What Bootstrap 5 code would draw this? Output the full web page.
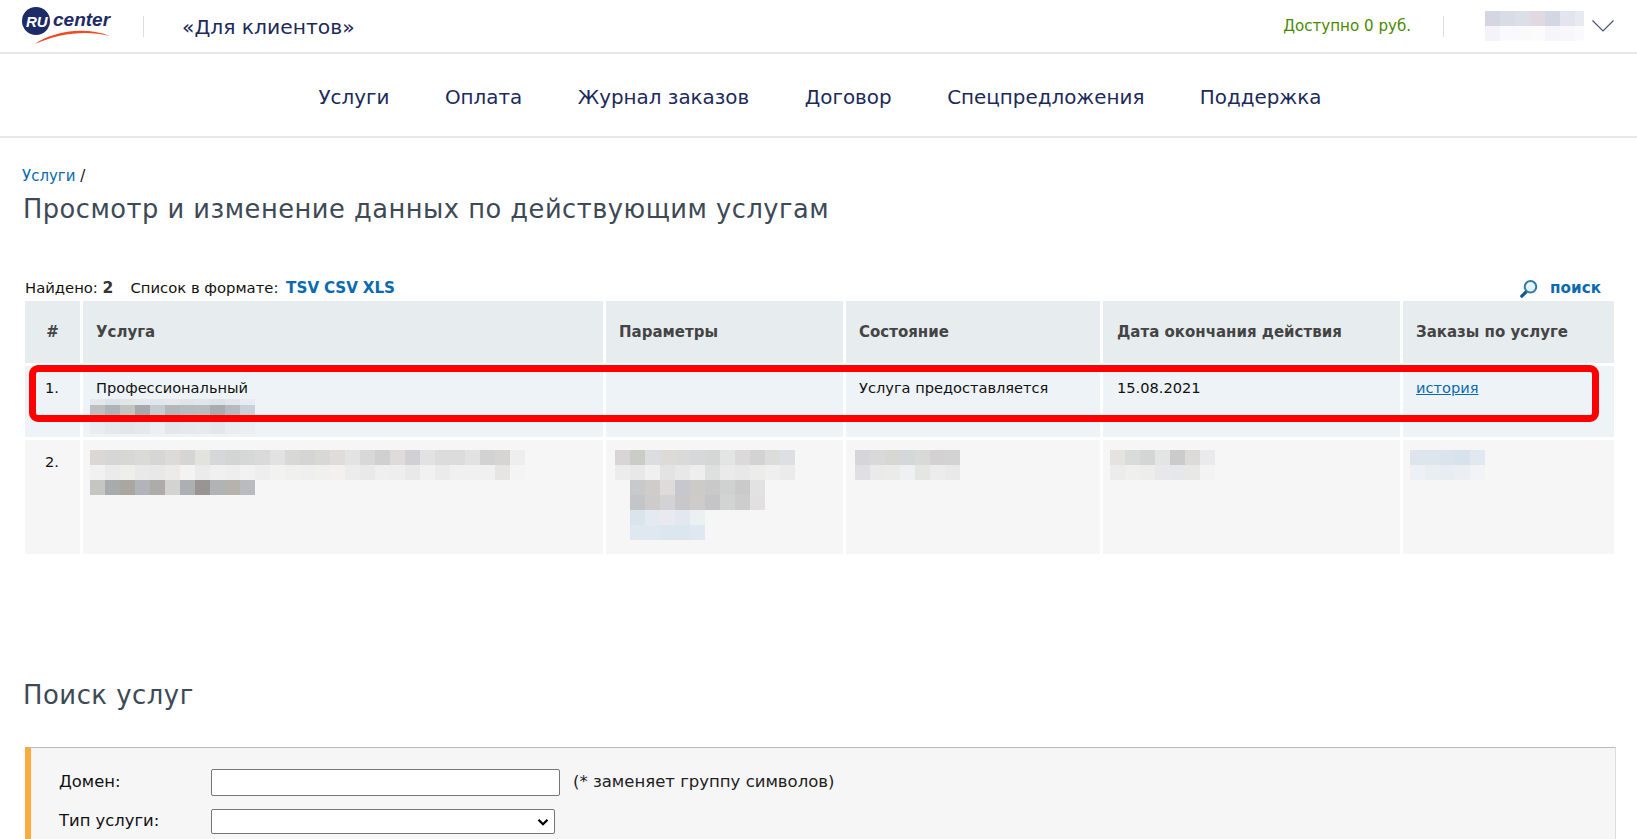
<!DOCTYPE html>
<html lang="ru">
<head>
    <meta charset="UTF-8">
    <meta name="viewport" content="width=device-width, initial-scale=1.0">
    <title>Для клиентов</title>
    <link href="https://cdn.jsdelivr.net/npm/bootstrap@5.3.0/dist/css/bootstrap.min.css" rel="stylesheet">
    <style>
        body { font-family: "DejaVu Sans", Verdana, sans-serif; font-size: 14.6px; color: #111; background: #fff; overflow: hidden; }
        a { color: #0a6ab0; text-decoration: none; }

        /* шапка */
        .top-bar { height: 54px; border-bottom: 2px solid #e8e8e8; padding: 0 23px 0 22px; }
        .top-sep { width: 1px; height: 21px; background: #ddd; }
        .top-title { font-size: 20.3px; color: #1c2a5a; margin: 3px 0 0 38px; }
        .top-sep-left { margin-left: 29px; }
        .money { font-size: 15.1px; color: #4a8a00; margin-right: 32px; }
        .user-blur { margin-left: 41px; margin-right: 8px; width: 99px; overflow: hidden; }
        .main-nav { height: 84px; border-bottom: 2px solid #e8e8e8; gap: 55.500px; padding: 5px 0 0 3px; }
        .main-nav a { font-size: 19.9px; color: #1c2a5a; }

        /* заголовки */
        .page-wrap { padding: 0 23px 0 25px; }
        .crumbs { font-size: 15px; margin: 28px 0 0 -3px; line-height: 20px; }
        .page-title { font-size: 25.7px; font-weight: 400; color: #3d4a55; letter-spacing: .5px; margin: 7px 0 0 -2px; line-height: 32px; }
        .found-bar { margin-top: 51px; height: 22px; padding-top: 3px; font-size: 14.8px; }
        .found-bar b { color: #333; font-size: 15.5px; margin-right: 3px; }
        .found-bar a { font-weight: 700; font-size: 15.2px; }
        .found-bar .fmt-first { margin-left: 3px; }
        .found-bar .find-link { font-size: 15.2px; margin-right: 13px; }

        /* таблица */
        .table-wrap { position: relative; }
        .table.svc-table { border-collapse: separate; border-spacing: 3px; table-layout: fixed; width: 1595px; margin: 0 0 0 -3px; }
        .table.svc-table > :not(caption) > * > * { border: 0; padding: 12px 14px 0 13px; line-height: 20px; box-shadow: none; color: #111; vertical-align: top; }
        .table.svc-table > thead > tr > th { background: #e7ecef; color: #444; height: 62px; padding: 0 14px 0 13px; vertical-align: middle; font-weight: 700; font-size: 15px; }
        .table.svc-table > tbody > .row-one > td { background: #eef3f8; height: 71px; }
        .table.svc-table > tbody > .row-two > td { background: #f6f6f6; height: 114px; }
        .table.svc-table > thead > tr > th:first-child { text-align: center; padding: 0; }
        .table.svc-table > tbody > tr > td:first-child { padding-left: 20px; padding-right: 0; }
        .table.svc-table > thead > tr > th.c-date, .table.svc-table > tbody > tr > td.c-date { padding-left: 14px; }
        .table.svc-table a { text-decoration: underline; }
        .c-num { width: 55px; } .c-svc { width: 520px; } .c-par { width: 237px; }
        .c-state { width: 254px; } .c-date { width: 297px; } .c-ord { width: 211px; }
        .blur-in { margin: 1px 0 0 -6px; }
        .blur-row2 { margin: -2px 0 0 -6px; }
        .blur-row2-r { margin: -2px 0 0 -4px; }
        .blur-row2-s { margin: -2px 0 0 -4px; }
        .blur-row2-d { margin: -2px 0 0 -7px; }
        .blur-row2-o { margin: -2px 0 0 -6px; }
        .red-frame { position: absolute; left: 4px; top: 67px; width: 1570px; height: 57px; border: 7px solid #f00; border-radius: 9px; pointer-events: none; }
        .px-row { display: flex; }
        .px-cell { flex: none; width: 15px; }

        /* поиск */
        .search-title { font-size: 25.9px; font-weight: 400; color: #3d4a55; letter-spacing: .5px; margin: 122px 0 0 -2px; line-height: 32px; }
        .search-box { margin-top: 36px; height: 92px; background: #f6f6f6; border-top: 1px solid #bbb; border-right: 1px solid #ddd; border-left: 6px solid #fdab3d; padding: 21px 0 0 28px; width: 1591px; font-size: 16.4px; }
        .f-label { width: 152px; }
        .f-input.form-control { width: 349px; height: 27px; padding: 0 4px; border: 1px solid #767676; border-radius: 2px; background: #fff; }
        .f-select.form-select { width: 344px; height: 25px; padding: 0 4px; border: 1px solid #767676; border-radius: 2px; background-image: url("data:image/svg+xml,%3csvg xmlns='http://www.w3.org/2000/svg' viewBox='0 0 16 10'%3e%3cpath fill='none' stroke='%23000' stroke-width='3' d='M2 2l6 6 6-6'/%3e%3c/svg%3e"); background-position: right 5px center; background-size: 12px 8px; }
        .f-hint { margin-left: 13px; color: #222; font-size: 16.5px; }
        .f-line-2 { margin-top: 13px; }
    </style>
</head>
<body>
    <!-- Шапка -->
    <div class="top-bar d-flex align-items-center">
        <svg width="92" height="38" viewBox="22 7 92 38" class="flex-shrink-0">
            <circle cx="36" cy="21" r="14" fill="#1d2b66"/>
            <text x="26" y="26.500" font-family="Liberation Sans, sans-serif" font-size="15" font-weight="700" font-style="italic" fill="#fff">RU</text>
            <text x="53" y="26" font-family="Liberation Sans, sans-serif" font-size="19" font-weight="700" font-style="italic" fill="#1d2b66">center</text>
            <path d="M35 44C50 33 82 25 110 36C86 30 60 33 35 44Z" fill="#ee4a23"/>
        </svg>
        <div class="top-sep top-sep-left"></div>
        <div class="top-title">«Для клиентов»</div>
        <div class="money ms-auto">Доступно 0 руб.</div>
        <div class="top-sep"></div>
        <div class="user-blur" data-px="d5d6e2 d9dbe5 dcdfe8 e0d9e0 d5d6e4 e3e4ed e9e9f0|f3f3f9 fafafc fafafb fbfbfc f6f6fa f8f8fb fafafc"></div>
        <svg width="22" height="12" viewBox="0 0 22 12" class="flex-shrink-0"><path d="M.5.5 11 11 21.500.5" fill="none" stroke="#4a5278" stroke-width="1.200"/></svg>
    </div>

    <nav class="main-nav d-flex align-items-center justify-content-center">
        <a href="#">Услуги</a>
        <a href="#">Оплата</a>
        <a href="#">Журнал заказов</a>
        <a href="#">Договор</a>
        <a href="#">Спецпредложения</a>
        <a href="#">Поддержка</a>
    </nav>

    <div class="page-wrap">
        <div class="crumbs"><a href="#">Услуги</a> /</div>
        <h1 class="page-title">Просмотр и изменение данных по действующим услугам</h1>

        <div class="found-bar d-flex align-items-center">
            <span>Найдено: <b>2</b> &nbsp; Список в формате: <a href="#" class="fmt-first">TSV</a> <a href="#">CSV</a> <a href="#">XLS</a></span>
            <a href="#" class="find-link ms-auto d-flex align-items-center gap-2">
                <svg width="18" height="18" viewBox="0 0 18 18" class="me-1"><path d="M6 12 1.800 16.200" stroke="#15598c" stroke-width="3.200" stroke-linecap="round"/><circle cx="10.500" cy="6.800" r="5.800" fill="#e4f1f6" stroke="#2f7ba6" stroke-width="2"/><path d="M7.500 6.500A3.200 3.200 0 0 1 10.500 3.500" fill="none" stroke="#fff" stroke-width="1.200"/></svg>
                поиск
            </a>
        </div>

        <div class="table-wrap">
            <table class="table svc-table">
                <thead>
                    <tr>
                        <th class="c-num">#</th>
                        <th class="c-svc">Услуга</th>
                        <th class="c-par">Параметры</th>
                        <th class="c-state">Состояние</th>
                        <th class="c-date">Дата окончания действия</th>
                        <th class="c-ord">Заказы по услуге</th>
                    </tr>
                </thead>
                <tbody>
                    <tr class="row-one">
                        <td>1.</td>
                        <td>Профессиональный
                            <div class="blur-in" data-hs="6,15,14" data-px="e3e8ec dde2e6 e0e5e8 e4e8ec e1e6ea e4e8eb e0e4e8 e1e6e9 dde2e6 e2e6ea e8ecf0|bdbfbe adb4b8 c2c4c2 a5a9ab c4ccd0 b2b7b9 b4bcc0 b7bcbd a9acad b4bac0 c8d0d8|e9edf1 e4e9ed e3e7ea e5e9ec ecf0f4 e3e7eb e5e9ed e6eaee e3e7eb e9edf1 ebeff3"></div>
                        </td>
                        <td></td>
                        <td>Услуга предоставляется</td>
                        <td class="c-date">15.08.2021</td>
                        <td><a href="#">история</a></td>
                    </tr>
                    <tr class="row-two">
                        <td>2.</td>
                        <td>
                            <div class="blur-row2" data-px="d9d8d7 d6d6d6 d7d7d5 dadad7 d6d6d6 dcdbd9 d5d5d5 e3e3dd d5d7d8 d3d4d4 d6d7d7 dadada e2e2e3 d8d9d7 d5d5d5 d8d9d7 dedddb e3e3e3 d8d8d8 d0d0d0 dddcda d1d1d3 e2e2e2 dddcdc dcdcdc e3e2e3 d2d2d2 d6d5d3 eeeeef|f1f1f1 ebebeb eeeeec e9e9e9 e8e8e9 ecebe9 f3f3f3 ebebeb f0f0f0 eeeeee f2f2f2 eeeeee f2f2f0 f0f0ef eeefee f0f0ee f2f1ee ececec e9e9e9 efefef eeeeee e9e9e9 f1f1f1 ebebeb f0f0f0 f0f0f0 f0f0f0 e6e5e3 f4f4f4|c5c5c2 a7abac aaa6a0 b2b4b9 adaca8 d3d3d1 acb0b2 999594 b0b4b4 b6b2ae b9bcbe"></div>
                        </td>
                        <td>
                            <div class="blur-row2-r" data-px="d7d5d5 c9cdc6 dcdde1 dcdbd8 d9dad9 d7d8da d5d6d6 e3e4e4 dbd9d9 d3d3d3 dcddda dedfe3|ececec e8e8e8 f0f0f0 e3e3e3 e8e8e8 eeeeee dedfdf eaeaea e8e8e8 ececea efefef ebebeb|- c8c9cb cecdcc dfdbdb c7c8cd cdcbc8 c9c9ca d0d2d1 cbcaca e3e2e2|- c4c5c8 cdccca d3d3d5 c8c8cb cdccca c5c5c8 d2d3d3 cecdcd e2e0e1|- d9e4ed e3eaf1 e8eaef e1e8ef ebf0f3|- dfe7ef dfe8f0 dce6ef dce6ef dfe8f0"></div>
                        </td>
                        <td>
                            <div class="blur-row2-s" data-px="d6d6d8 d9d9d9 d7d7d3 d4d8db d9d9d8 d3d1d2 d3d3d3|e0e0e2 e9eae9 ebebe9 eff0f2 e5e5e3 ececec e9e9e9"></div>
                        </td>
                        <td class="c-date">
                            <div class="blur-row2-d" data-px="e5e2e2 dadcdc d4d6d6 e3e5e5 cbcbcb dddbda eaeaec|ececec efefee ededec e8e8ea e6e7ea e8e8e6 f3f3f3"></div>
                        </td>
                        <td>
                            <div class="blur-row2-o" data-px="dee5ec dde5ed dbe4ed d8e2ec e2e8ef|edf1f5 e9eef3 e8edf2 ebeff4 f1f3f6"></div>
                        </td>
                    </tr>
                </tbody>
            </table>
            <div class="red-frame"></div>
        </div>

        <h2 class="search-title">Поиск услуг</h2>
        <form class="search-box">
            <div class="d-flex align-items-center">
                <label class="f-label">Домен:</label>
                <input type="text" class="form-control f-input">
                <span class="f-hint">(* заменяет группу символов)</span>
            </div>
            <div class="d-flex align-items-center f-line-2">
                <label class="f-label">Тип услуги:</label>
                <select class="form-select f-select"><option></option></select>
            </div>
        </form>
    </div>

    <script src="https://cdn.jsdelivr.net/npm/bootstrap@5.3.0/dist/js/bootstrap.bundle.min.js"></script>
    <script>
        // Размытые (скрытые) данные: клетки 15px
        document.querySelectorAll("[data-px]").forEach(box => {
            const heights = (box.dataset.hs || "").split(",");
            box.dataset.px.split("|").forEach((line, i) => {
                const row = document.createElement("div");
                row.className = "px-row";
                row.style.height = (heights[i] || 15) + "px";
                line.split(" ").forEach(col => {
                    const cell = document.createElement("div");
                    cell.className = "px-cell";
                    if (col !== "-") cell.style.background = "#" + col;
                    row.appendChild(cell);
                });
                box.appendChild(row);
            });
        });
    </script>
</body>
</html>
